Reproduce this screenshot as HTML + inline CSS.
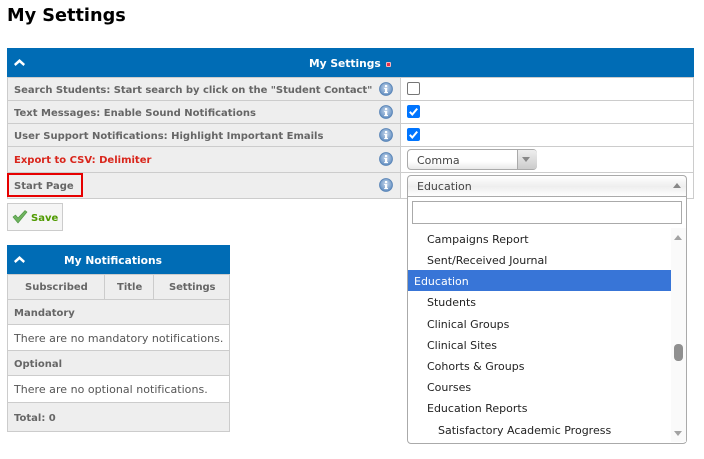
<!DOCTYPE html>
<html><head><meta charset="utf-8"><style>
html,body{margin:0;padding:0;background:#fff;width:704px;height:459px;overflow:hidden}
body{position:relative;font-family:"DejaVu Sans",sans-serif;font-size:11px;color:#333}
.a{position:absolute;white-space:nowrap}
.b{font-weight:bold;color:#666;font-size:10px;line-height:14px}
.r{position:absolute;background:#eee}
.l{position:absolute;background:#ccc}
.it{position:absolute;white-space:nowrap;font-size:11px;line-height:14px;color:#222}
.n{font-size:11px;color:#555;line-height:14px;letter-spacing:.03px}
</style></head><body>
<svg width="0" height="0" style="position:absolute"><defs>
<radialGradient id="ig" cx=".5" cy=".4" r=".6"><stop offset="0" stop-color="#c8d8ec"/><stop offset="1" stop-color="#5f8cc0"/></radialGradient>
<g id="info"><circle cx="7" cy="7" r="6.4" fill="url(#ig)" stroke="#5b86b8"/><rect x="6" y="6" width="2.2" height="5" fill="#fff"/><rect x="5.2" y="6" width="1.5" height="1" fill="#fff"/><rect x="5.2" y="10" width="3.8" height="1.1" fill="#fff"/><rect x="6" y="3" width="2.2" height="2" fill="#fff"/></g>
<path id="chev" d="M0 6 L5.5 1 L11 6 L9.5 8 L5.5 4.5 L1.5 8 Z" fill="#fff"/>
</defs></svg>

<div class="a" style="left:7px;top:4px;font-size:17.7px;font-weight:bold;color:#000;line-height:24px">My Settings</div>

<div class="r" style="left:7px;top:48px;width:687px;height:29px;background:#006cb5"></div>
<svg class="a" style="left:14px;top:58px" width="12" height="9"><use href="#chev"/></svg>
<div class="a" style="left:309px;top:57px;font-weight:bold;color:#fff;font-size:10.7px;line-height:14px">My Settings</div>
<div class="a" style="left:386px;top:62px;width:3px;height:3px;background:#e8304a;border:1px solid #f7b5bf;border-radius:1px"></div>

<div class="r" style="left:7px;top:77px;width:393px;height:121px"></div>
<div class="l" style="left:7px;top:77px;width:687px;height:1px"></div>
<div class="l" style="left:7px;top:100px;width:687px;height:1px"></div>
<div class="l" style="left:7px;top:123px;width:687px;height:1px"></div>
<div class="l" style="left:7px;top:146px;width:687px;height:1px"></div>
<div class="l" style="left:7px;top:172px;width:687px;height:1px"></div>
<div class="l" style="left:7px;top:198px;width:687px;height:1px"></div>
<div class="l" style="left:7px;top:77px;width:1px;height:122px"></div>
<div class="l" style="left:400px;top:77px;width:1px;height:122px"></div>
<div class="l" style="left:693px;top:77px;width:1px;height:122px"></div>

<div class="a b" style="left:14px;top:84px;letter-spacing:-.05px">Search Students: Start search by click on the "Student Contact"</div>
<div class="a b" style="left:14px;top:107px">Text Messages: Enable Sound Notifications</div>
<div class="a b" style="left:14px;top:130px">User Support Notifications: Highlight Important Emails</div>
<div class="a b" style="left:14px;top:154px;color:#d9261c">Export to CSV: Delimiter</div>
<div class="a b" style="left:14px;top:180px">Start Page</div>
<div class="a" style="left:7px;top:173px;width:72px;height:20px;border:2px solid #e60000"></div>

<svg class="a" style="left:379px;top:82px" width="14" height="14"><use href="#info"/></svg>
<svg class="a" style="left:379px;top:105px" width="14" height="14"><use href="#info"/></svg>
<svg class="a" style="left:379px;top:128px" width="14" height="14"><use href="#info"/></svg>
<svg class="a" style="left:379px;top:152px" width="14" height="14"><use href="#info"/></svg>
<svg class="a" style="left:379px;top:178px" width="14" height="14"><use href="#info"/></svg>

<div class="a" style="left:407px;top:82px;width:11px;height:11px;border:1px solid #767676;border-radius:2px;background:#fff"></div>
<svg class="a" style="left:407px;top:105px" width="13" height="13"><rect width="13" height="13" rx="2" fill="#0075ff"/><path d="M2.8 6.8 L5.3 9.5 L10.2 3.6" fill="none" stroke="#fff" stroke-width="2"/></svg>
<svg class="a" style="left:407px;top:128px" width="13" height="13"><rect width="13" height="13" rx="2" fill="#0075ff"/><path d="M2.8 6.8 L5.3 9.5 L10.2 3.6" fill="none" stroke="#fff" stroke-width="2"/></svg>

<div class="a" style="left:407px;top:149px;width:128px;height:19px;border:1px solid #aaa;border-radius:4px;background:linear-gradient(#fff 60%,#e8e8e8)"></div>
<div class="a" style="left:517px;top:150px;width:19px;height:19px;border-left:1px solid #aaa;border-radius:0 3px 3px 0;background:linear-gradient(#eee,#ccc)"></div>
<div class="a" style="left:522px;top:157px;width:0;height:0;border-left:4px solid transparent;border-right:4px solid transparent;border-top:5px solid #888"></div>
<div class="a" style="left:417px;top:154px;line-height:14px;color:#444">Comma</div>

<div class="a" style="left:407px;top:175px;width:278px;height:21px;border:1px solid #aaa;border-bottom:0;border-radius:4px 4px 0 0;background:linear-gradient(#fff,#eee 50%,#fff)"></div>
<div class="a" style="left:417px;top:180px;line-height:14px;color:#444">Education</div>
<div class="a" style="left:673px;top:183px;width:0;height:0;border-left:4px solid transparent;border-right:4px solid transparent;border-bottom:5px solid #888"></div>

<div class="a" style="left:407px;top:196px;width:278px;height:246px;border:1px solid #aaa;border-radius:0 0 4px 4px;background:#fff"></div>
<div class="a" style="left:412px;top:201px;width:268px;height:21px;border:1px solid #aaa;background:#fff"></div>
<div class="a" style="left:671px;top:228px;width:15px;height:214px;background:#fafafa"></div>
<div class="a" style="left:674px;top:235px;width:0;height:0;border-left:4.5px solid transparent;border-right:4.5px solid transparent;border-bottom:5px solid #a3a3a3"></div>
<div class="a" style="left:674px;top:431px;width:0;height:0;border-left:4.5px solid transparent;border-right:4.5px solid transparent;border-top:5px solid #a3a3a3"></div>
<div class="a" style="left:674px;top:344px;width:9px;height:17px;background:#8f8f8f;border-radius:4px"></div>
<div class="a" style="left:408px;top:270px;width:263px;height:21px;background:#3875d7"></div>
<div class="it" style="left:427px;top:233px">Campaigns Report</div>
<div class="it" style="left:427px;top:254px">Sent/Received Journal</div>
<div class="it" style="left:414px;top:275px;color:#fff">Education</div>
<div class="it" style="left:427px;top:296px">Students</div>
<div class="it" style="left:427px;top:318px">Clinical Groups</div>
<div class="it" style="left:427px;top:339px">Clinical Sites</div>
<div class="it" style="left:427px;top:360px">Cohorts &amp; Groups</div>
<div class="it" style="left:427px;top:381px">Courses</div>
<div class="it" style="left:427px;top:402px">Education Reports</div>
<div class="it" style="left:438px;top:424px">Satisfactory Academic Progress</div>

<div class="a" style="left:7px;top:203px;width:54px;height:26px;border:1px solid #ccc;background:#f5f5f5"></div>
<svg class="a" style="left:12px;top:209px" width="16" height="15"><path d="M1 8 L3.5 6 L6 9 L13 1.5 L15 3 L6 14 Z" fill="#6fb35f" stroke="#4d9440" stroke-width=".6"/></svg>
<div class="a" style="left:31px;top:212px;font-weight:bold;font-size:10px;color:#4f9a00;line-height:14px">Save</div>

<div class="r" style="left:7px;top:245px;width:223px;height:29px;background:#006cb5"></div>
<svg class="a" style="left:14px;top:255px" width="12" height="9"><use href="#chev"/></svg>
<div class="a" style="left:64px;top:254px;font-weight:bold;color:#fff;font-size:10.7px;line-height:14px">My Notifications</div>

<div class="r" style="left:7px;top:274px;width:223px;height:51px"></div>
<div class="r" style="left:7px;top:350px;width:223px;height:26px"></div>
<div class="r" style="left:7px;top:402px;width:223px;height:29px"></div>
<div class="l" style="left:7px;top:274px;width:223px;height:1px"></div>
<div class="l" style="left:7px;top:299px;width:223px;height:1px"></div>
<div class="l" style="left:7px;top:324px;width:223px;height:1px"></div>
<div class="l" style="left:7px;top:350px;width:223px;height:1px"></div>
<div class="l" style="left:7px;top:375px;width:223px;height:1px"></div>
<div class="l" style="left:7px;top:402px;width:223px;height:1px"></div>
<div class="l" style="left:7px;top:431px;width:223px;height:1px"></div>
<div class="l" style="left:7px;top:274px;width:1px;height:158px"></div>
<div class="l" style="left:229px;top:274px;width:1px;height:158px"></div>
<div class="l" style="left:104px;top:274px;width:1px;height:25px"></div>
<div class="l" style="left:153px;top:274px;width:1px;height:25px"></div>
<div class="a b" style="left:25px;top:281px">Subscribed</div>
<div class="a b" style="left:117px;top:281px">Title</div>
<div class="a b" style="left:169px;top:281px;letter-spacing:-.1px">Settings</div>
<div class="a b" style="left:14px;top:307px">Mandatory</div>
<div class="a n" style="left:14px;top:332px">There are no mandatory notifications.</div>
<div class="a b" style="left:14px;top:358px">Optional</div>
<div class="a n" style="left:14px;top:383px">There are no optional notifications.</div>
<div class="a b" style="left:14px;top:412px">Total: 0</div>
</body></html>
